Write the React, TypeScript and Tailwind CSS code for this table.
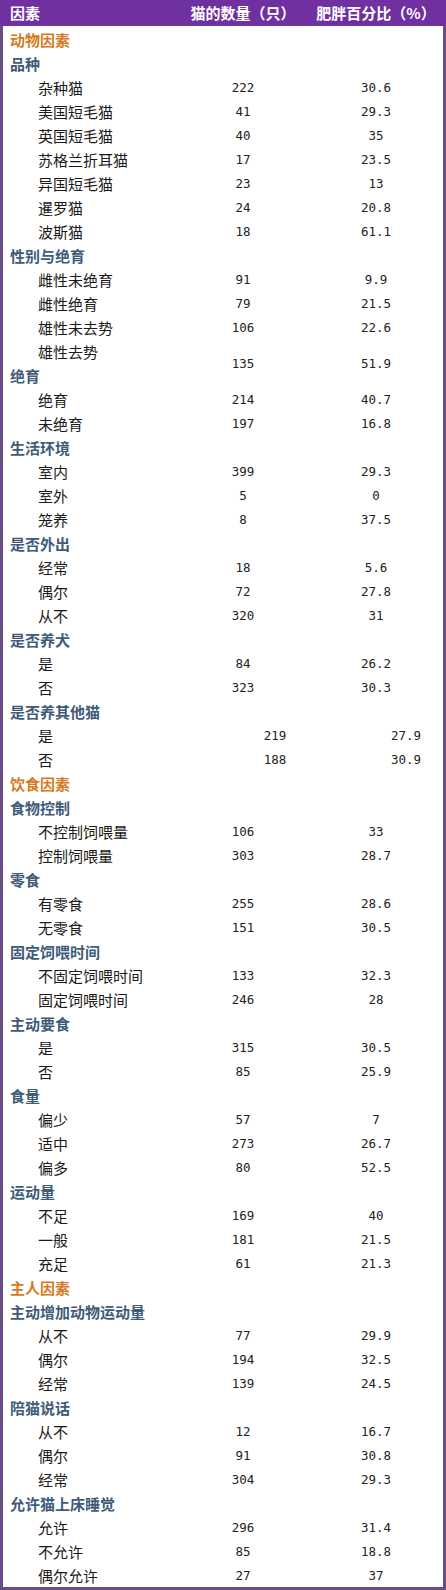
import React from "react";

type Row =
  | { t: "cat"; label: string }
  | { t: "sub"; label: string; span?: boolean }
  | { t: "item"; label: string; n?: string; p?: string; shift?: boolean; merged?: boolean };

const rows: Row[] = [
  { t: "cat", label: "动物因素" },
  { t: "sub", label: "品种" },
  { t: "item", label: "杂种猫", n: "222", p: "30.6" },
  { t: "item", label: "美国短毛猫", n: "41", p: "29.3" },
  { t: "item", label: "英国短毛猫", n: "40", p: "35" },
  { t: "item", label: "苏格兰折耳猫", n: "17", p: "23.5" },
  { t: "item", label: "异国短毛猫", n: "23", p: "13" },
  { t: "item", label: "暹罗猫", n: "24", p: "20.8" },
  { t: "item", label: "波斯猫", n: "18", p: "61.1" },
  { t: "sub", label: "性别与绝育" },
  { t: "item", label: "雌性未绝育", n: "91", p: "9.9" },
  { t: "item", label: "雌性绝育", n: "79", p: "21.5" },
  { t: "item", label: "雄性未去势", n: "106", p: "22.6" },
  { t: "item", label: "雄性去势", n: "135", p: "51.9", merged: true },
  { t: "sub", label: "绝育", span: false },
  { t: "item", label: "绝育", n: "214", p: "40.7" },
  { t: "item", label: "未绝育", n: "197", p: "16.8" },
  { t: "sub", label: "生活环境" },
  { t: "item", label: "室内", n: "399", p: "29.3" },
  { t: "item", label: "室外", n: "5", p: "0" },
  { t: "item", label: "笼养", n: "8", p: "37.5" },
  { t: "sub", label: "是否外出" },
  { t: "item", label: "经常", n: "18", p: "5.6" },
  { t: "item", label: "偶尔", n: "72", p: "27.8" },
  { t: "item", label: "从不", n: "320", p: "31" },
  { t: "sub", label: "是否养犬" },
  { t: "item", label: "是", n: "84", p: "26.2" },
  { t: "item", label: "否", n: "323", p: "30.3" },
  { t: "sub", label: "是否养其他猫" },
  { t: "item", label: "是", n: "219", p: "27.9", shift: true },
  { t: "item", label: "否", n: "188", p: "30.9", shift: true },
  { t: "cat", label: "饮食因素" },
  { t: "sub", label: "食物控制" },
  { t: "item", label: "不控制饲喂量", n: "106", p: "33" },
  { t: "item", label: "控制饲喂量", n: "303", p: "28.7" },
  { t: "sub", label: "零食" },
  { t: "item", label: "有零食", n: "255", p: "28.6" },
  { t: "item", label: "无零食", n: "151", p: "30.5" },
  { t: "sub", label: "固定饲喂时间" },
  { t: "item", label: "不固定饲喂时间", n: "133", p: "32.3" },
  { t: "item", label: "固定饲喂时间", n: "246", p: "28" },
  { t: "sub", label: "主动要食" },
  { t: "item", label: "是", n: "315", p: "30.5" },
  { t: "item", label: "否", n: "85", p: "25.9" },
  { t: "sub", label: "食量" },
  { t: "item", label: "偏少", n: "57", p: "7" },
  { t: "item", label: "适中", n: "273", p: "26.7" },
  { t: "item", label: "偏多", n: "80", p: "52.5" },
  { t: "sub", label: "运动量" },
  { t: "item", label: "不足", n: "169", p: "40" },
  { t: "item", label: "一般", n: "181", p: "21.5" },
  { t: "item", label: "充足", n: "61", p: "21.3" },
  { t: "cat", label: "主人因素" },
  { t: "sub", label: "主动增加动物运动量" },
  { t: "item", label: "从不", n: "77", p: "29.9" },
  { t: "item", label: "偶尔", n: "194", p: "32.5" },
  { t: "item", label: "经常", n: "139", p: "24.5" },
  { t: "sub", label: "陪猫说话" },
  { t: "item", label: "从不", n: "12", p: "16.7" },
  { t: "item", label: "偶尔", n: "91", p: "30.8" },
  { t: "item", label: "经常", n: "304", p: "29.3" },
  { t: "sub", label: "允许猫上床睡觉" },
  { t: "item", label: "允许", n: "296", p: "31.4" },
  { t: "item", label: "不允许", n: "85", p: "18.8" },
  { t: "item", label: "偶尔允许", n: "27", p: "37" },
];

const cjk = "font-['SimSun','Noto_Sans_CJK_SC',sans-serif]";
const mono = "font-['DejaVu_Sans_Mono',monospace]";

export default function App() {
  return (
    <div className="w-[446px] bg-white">
      <div
        className={`flex h-[26px] items-center bg-[#7030a0] text-[15px] font-bold text-white ${cjk}`}
      >
        <div className="w-[186px] pl-[10px]">因素</div>
        <div className="w-[114px] text-center">猫的数量（只）</div>
        <div className="flex-1 pl-[9px] pr-[3px] text-center">肥胖百分比（%）</div>
      </div>
      <div className="grid grid-cols-[183px_114px_1fr] auto-rows-[24px] overflow-hidden border-x-[3px] border-b-[3px] border-[#6a4c86] pt-[1px] h-[1564px]">
        {rows.map((r, i) => {
          if (r.t === "cat") {
            return (
              <div
                key={i}
                className={`col-span-3 flex items-center pl-[7px] pt-[2px] text-[15px] font-bold text-[#d47a22] ${cjk}`}
              >
                {r.label}
              </div>
            );
          }
          if (r.t === "sub") {
            return (
              <div
                key={i}
                className={`${r.span === false ? "" : "col-span-3"} flex items-center pl-[7px] pt-[2px] text-[15px] font-bold text-[#3e5b7a] ${cjk}`}
              >
                {r.label}
              </div>
            );
          }
          const spanCls = r.merged ? "row-span-2" : "";
          return (
            <React.Fragment key={i}>
              <div
                className={`flex items-center pl-[35px] pt-[2px] text-[15px] text-[#1a1a1a] ${cjk}`}
              >
                {r.label}
              </div>
              <div
                className={`${spanCls} flex items-center justify-center pt-[2px] text-[12.5px] text-[#222] ${mono} ${r.shift ? "pl-[64px]" : ""}`}
              >
                {r.n}
              </div>
              <div
                className={`${spanCls} flex items-center justify-center pt-[2px] text-[12.5px] text-[#222] ${mono} ${r.shift ? "pl-[69px]" : "pl-[9px]"}`}
              >
                {r.p}
              </div>
            </React.Fragment>
          );
        })}
      </div>
    </div>
  );
}
